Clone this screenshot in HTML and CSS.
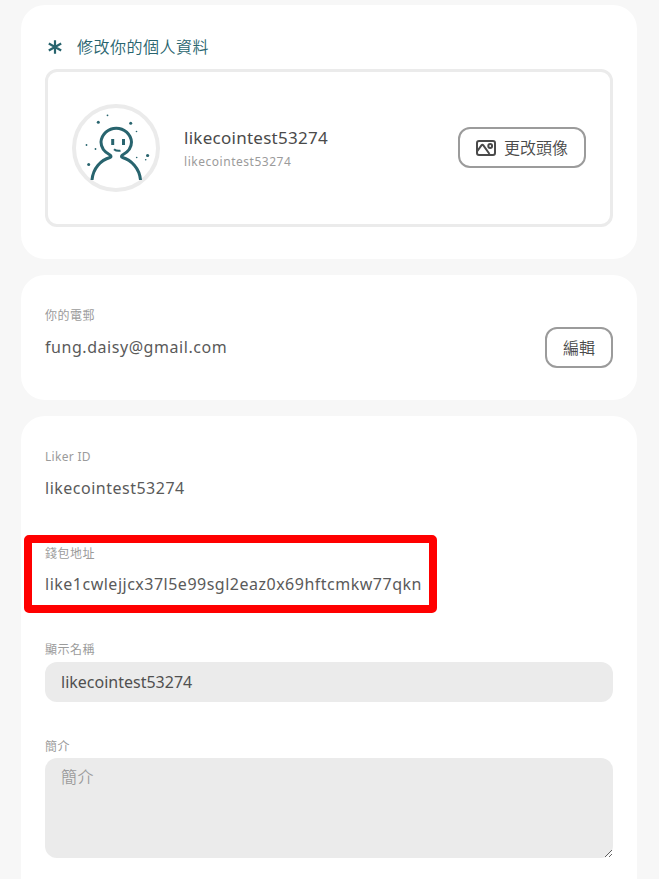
FILE: index.html
```html
<!DOCTYPE html>
<html lang="zh-Hant">
<head>
<meta charset="utf-8">
<title>修改你的個人資料</title>
<link rel="stylesheet" href="styles.css">
</head>
<body>
<main class="page">
  <section class="card card-profile">
    <h1 class="heading">
      <svg class="heading-icon" width="14" height="14" viewBox="0 0 14 14"><path d="M7 .2v13.600M.8 3.500l12.400 7M13.200 3.500L.8 10.500"/></svg>
      <span>修改你的個人資料</span>
    </h1>
    <div class="profile">
      <svg class="avatar" width="88" height="88" viewBox="0 0 88 88">
        <circle class="ring" cx="44" cy="44" r="42"/>
        <path class="body" d="M20 76C21 64 29 56 38 53.5Q40 52.500 38 51C31.500 47.500 29 43 29 38A15.300 15 0 0 1 59.500 38C59.500 43 57 47.500 50.500 51Q48.500 52.500 50.500 53.500C59 56 67.500 64 68.500 76"/>
        <path class="eyes" d="M40.700 35v6M51.500 35v6"/>
        <path class="smile" d="M42 45.200Q44.500 47.400 48.500 46.700"/>
        <g class="dots"><circle cx="26.300" cy="18.300" r="1.500"/><circle cx="35.500" cy="11.300" r=".9"/><circle cx="58.700" cy="19.300" r="1.500"/><circle cx="64.500" cy="27.500" r=".8"/><circle cx="14.500" cy="41" r=".9"/><circle cx="23.500" cy="45" r=".9"/><circle cx="16.700" cy="60.500" r="1.500"/><circle cx="64.700" cy="53.500" r=".8"/><circle cx="75.600" cy="51.500" r="1.600"/><circle cx="73.700" cy="55.700" r=".8"/></g>
      </svg>
      <div class="identity">
        <div class="name">likecointest53274</div>
        <div class="handle">likecointest53274</div>
      </div>
      <button class="button button-avatar">
        <svg class="picture-icon" width="20" height="16" viewBox="0 0 20 16"><rect x="1" y="1" width="18" height="14" rx="2"/><path d="M1 11.500L5.600 5.200Q6.400 4.200 7.200 5.200L13.500 14"/><circle cx="14.200" cy="6" r="1.900"/></svg>
        <span>更改頭像</span>
      </button>
    </div>
  </section>

  <section class="card card-email">
    <div>
      <div class="label">你的電郵</div>
      <div class="value email">fung.daisy@gmail.com</div>
    </div>
    <button class="button button-edit">編輯</button>
  </section>

  <section class="card card-details">
    <div class="label label-latin">Liker ID</div>
    <div class="value liker">likecointest53274</div>
    <div class="wallet">
      <div class="label">錢包地址</div>
      <div class="value address">like1cwlejjcx37l5e99sgl2eaz0x69hftcmkw77qkn</div>
    </div>
    <label class="label" for="display-name">顯示名稱</label>
    <input class="input" id="display-name" value="likecointest53274">
    <label class="label label-bio" for="bio">簡介</label>
    <textarea class="textarea" id="bio" placeholder="簡介"></textarea>
  </section>
</main>
</body>
</html>
```

FILE: styles.css
```css
* { box-sizing: border-box; }
body {
  margin: 0;
  height: 879px;
  overflow: hidden;
  background: #f7f7f7;
  color: #5a5a5a;
  font-family: "Noto Sans", "Noto Sans CJK TC", sans-serif;
  font-size: 16px;
}
.page {
  display: flex;
  flex-direction: column;
  gap: 16px;
  width: 616px;
  margin-left: 21px;
  padding-top: 5px;
}
.card { background: #fff; border-radius: 24px; padding: 24px; }
.card-profile { height: 254px; }
.heading {
  display: flex;
  align-items: center;
  gap: 15px;
  height: 36px;
  margin: 0 0 4px;
  padding-left: 3px;
  color: #28646e;
  font-size: 16px;
  font-weight: 350;
  letter-spacing: .5px;
}
.heading span { padding-bottom: 2px; }
.heading-icon { fill: none; stroke: #28646e; stroke-width: 2.2; }
.profile {
  display: flex;
  align-items: center;
  height: 158px;
  padding: 0 24px;
  border: 3px solid #ebebeb;
  border-radius: 12px;
}
.avatar { flex: none; fill: none; stroke: #28646e; }
.ring { stroke: #ebebeb; stroke-width: 4; }
.body { stroke-width: 3; }
.eyes { stroke-width: 3; }
.smile { stroke-width: 2; }
.dots { fill: #28646e; stroke: none; }
.identity { flex: 1; margin-left: 24px; padding-top: 1px; }
.name { line-height: 26px; font-size: 17px; letter-spacing: .27px; color: #4a4a4a; }
.handle { line-height: 21px; font-size: 12px; color: #9b9b9b; letter-spacing: .53px; }
.button {
  display: flex;
  align-items: center;
  justify-content: center;
  height: 41px;
  padding: 0 0 2px;
  background: #fff;
  border: 2px solid #9b9b9b;
  border-radius: 12px;
  color: #4a4a4a;
  font: inherit;
  font-weight: 350;
}
.button-avatar { width: 128px; gap: 8px; margin-bottom: 2px; padding-bottom: 0; }
.picture-icon { fill: none; stroke: #4a4a4a; stroke-width: 2; margin-top: 1px; }
.button-edit { width: 68px; margin-top: 28px; }
.card-email { display: flex; justify-content: space-between; height: 125px; padding-top: 24px; }
.card-email .label { margin-top: 7px; }
.label {
  display: block;
  height: 20px;
  line-height: 20px;
  font-size: 12px;
  color: #9b9b9b;
  letter-spacing: .5px;
}
.label-latin { letter-spacing: .3px; }
.value { line-height: 24px; margin-top: 9px; letter-spacing: .5px; }
.value.email { letter-spacing: .55px; }
.wallet .value { margin-top: 8px; }
.card-details { height: 500px; padding-top: 31px; }
.wallet {
  width: 413px;
  height: 78px;
  margin: 35px 0 27px -21px;
  padding: 1px 13px;
  border: 8px solid #f00;
  border-radius: 5px;
}
.input, .textarea {
  display: block;
  width: 568px;
  margin: 2px 0 0;
  padding: 0 16px;
  border: 0;
  border-radius: 12px;
  background: #ebebeb;
  color: #505050;
  font: inherit;
}
.input { height: 40px; }
.label-bio { margin-top: 35px; }
.textarea { height: 100px; margin-top: 1px; padding-top: 6px; resize: both; }
.textarea::placeholder { color: #9b9b9b; letter-spacing: .5px; font-weight: 350; }
```
